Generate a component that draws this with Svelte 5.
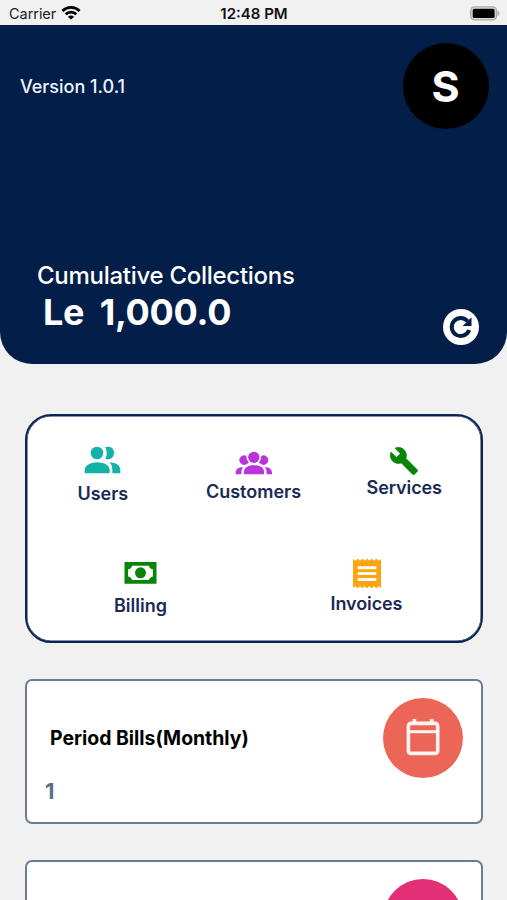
<script>
  const rows = [
    [
      { name: 'Users', icon: 'users' },
      { name: 'Customers', icon: 'customers' },
      { name: 'Services', icon: 'services' }
    ],
    [
      { name: 'Billing', icon: 'billing' },
      { name: 'Invoices', icon: 'invoices' }
    ]
  ];
</script>

<main class="screen">
  <div class="status">
    <div class="carrier">
      <span>Carrier</span>
      <svg width="20" height="15" viewBox="0 0 20 15" fill="none" stroke="#000" stroke-width="2.7">
        <path d="M1.4 5.9C6.3 1.3 13.7 1.3 18.6 5.9" />
        <path d="M4.7 9.300C7.7 6.400 12.3 6.400 15.3 9.300" />
        <path d="M10 14.600L6.900 11.700C8.700 10.100 11.300 10.100 13.100 11.700Z" fill="#000" stroke="none" />
      </svg>
    </div>
    <time>12:48 PM</time>
    <svg class="battery" width="31" height="15" viewBox="0 0 31 15">
      <rect x="0.8" y="0.9" width="25.6" height="13" rx="3.6" fill="#ddd" stroke="#aaa" stroke-width="1.4" />
      <rect x="2.7" y="2.8" width="21.9" height="9.2" rx="1.6" fill="#000" />
      <path d="M28 5.2Q30.2 7.4 28 9.6Z" fill="#aaa" stroke="#aaa" />
    </svg>
  </div>

  <header>
    <div class="top">
      <span class="version">Version 1.0.1</span>
      <div class="avatar"><span>S</span></div>
    </div>
    <div class="summary">
      <div>
        <div class="label">Cumulative Collections</div>
        <div class="amount"><span>Le</span><span>1,000.0</span></div>
      </div>
      <button class="refresh" aria-label="Refresh">
        <svg width="36" height="36" viewBox="0 0 36 36">
          <path d="M24.600 12.200A9 9 0 1 0 26.200 21" fill="none" stroke="#021e49" stroke-width="3.900" />
          <path d="M28.500 8.200V17H19.700Z" fill="#021e49" />
        </svg>
      </button>
    </div>
  </header>

  <section class="menu">
    {#each rows as row, i}
      <div class="row row{i}">
        {#each row as item}
          <div class="item {item.icon}">
            {#if item.icon === 'users'}
              <svg width="38" height="28" viewBox="75 49 114 84" fill="#14b1a7">
                <circle cx="114" cy="70" r="19" />
                <path d="M139 53C160 46 170 65 163 78C158 89 147 91 139 87C145 76 144 64 139 53Z" />
                <path d="M77 131V122C78 106 93 99 115 98C137 99 151 106 152 122V131Z" />
                <path d="M152 98C171 99 184 107 184 122V131H160V122C160 111 157 104 152 98Z" />
              </svg>
            {:else if item.icon === 'customers'}
              <svg width="38" height="24" viewBox="135 62 114 72" fill="#b933df">
                <circle cx="191.500" cy="81" r="17" />
                <path d="M169 77A14 14 0 1 0 170 101C177 99 177 96 174 93Q169 87 169 77Z" />
                <path d="M214 77A14 14 0 1 1 213 101C206 99 206 96 209 93Q214 87 214 77Z" />
                <path d="M162 132V123C164 110 175 105 192 105C209 105 221 110 222 123V132Z" />
                <path d="M137 132V126C138 116 145 111 159 110Q154 116 154 132Z" />
                <path d="M246 132V126C245 116 238 111 225 110Q230 116 230 132Z" />
              </svg>
            {:else if item.icon === 'services'}
              <svg width="30" height="30" viewBox="0 0 24 24" fill="#088408" stroke="#088408" stroke-width="0.400">
                <path d="M22.700 19l-9.100-9.100c.9-2.300.4-5-1.500-6.900-2-2-5-2.400-7.400-1.300L9 6 6 9 1.600 4.700C.4 7.100.9 10.100 2.900 12.100c1.900 1.900 4.600 2.400 6.900 1.500l9.100 9.100c.4.4 1 .4 1.400 0l2.300-2.300c.5-.4.5-1.100.1-1.400z" />
              </svg>
            {:else if item.icon === 'billing'}
              <svg width="33" height="22" viewBox="0 0 33 22">
                <path d="M0.500 0H32.500V21.700H0.500Z" fill="#088408" />
                <path d="M8 3.700H25Q25.600 6.800 28.900 7.300V14.400Q25.600 14.900 25 18H8Q7.400 14.900 4.100 14.400V7.300Q7.400 6.800 8 3.700Z" fill="#fff" />
                <circle cx="16.500" cy="10.800" r="5.500" fill="#088408" />
              </svg>
            {:else}
              <svg width="30" height="31" viewBox="0 0 30 31">
                <path d="M1 1L3.300 2.800 5.700 .8 8 2.800 10.300 .8 12.700 2.800 15 .8 17.300 2.800 19.700 .8 22 2.800 24.300 .8 26.700 2.800 29 1V30L26.700 28.200 24.300 30.200 22 28.200 19.700 30.200 17.300 28.200 15 30.200 12.700 28.200 10.300 30.200 8 28.200 5.700 30.200 3.300 28.200 1 30Z" fill="#fca510" />
                <path d="M5.700 9.700H24.300M5.700 15.600H24.300M5.700 21.500H24.300" stroke="#fff" stroke-width="2.900" />
              </svg>
            {/if}
            <span>{item.name}</span>
          </div>
        {/each}
      </div>
    {/each}
  </section>

  <section class="card">
    <div class="info">
      <h2>Period Bills(Monthly)</h2>
      <p>1</p>
    </div>
    <div class="disc coral">
      <svg width="34" height="38" viewBox="0 0 34 38" fill="none" stroke="#fff4f0" stroke-width="3.600">
        <rect x="2.400" y="5.400" width="29.300" height="30" rx="2.500" />
        <path d="M2.400 13.700H31.700" stroke-width="3" />
        <path d="M8.400 1V6M25.700 1V6" stroke-width="3.600" />
      </svg>
    </div>
  </section>
  <section class="card">
    <div class="info"></div>
    <div class="disc pink"></div>
  </section>
</main>

<style>
  :global(body) { margin: 0; background: #f1f1f1; }
  .screen {
    height: 900px;
    overflow: hidden;
    background: #f1f1f1;
    font-family: Inter, "Liberation Sans", sans-serif;
    box-sizing: border-box;
  }
  .screen * { box-sizing: border-box; }
  svg { display: block; flex: none; }
  .status {
    display: grid;
    grid-template-columns: 1fr auto 1fr;
    align-items: center;
    height: 25.400px;
    padding: 1px 6px 0 9px;
    font-size: 14.500px;
    color: #222;
  }
  .carrier { display: flex; align-items: center; gap: 5px; }
  .carrier span { letter-spacing: -0.050px; }
  .carrier svg { margin-top: -1px; }
  time { font-size: 15px; font-weight: 600; color: #111; margin-right: 2px; }
  .battery { justify-self: end; }
  header {
    height: 338.600px;
    background: #021e49;
    border-radius: 0 0 32px 32px;
    color: #fff;
    display: flex;
    flex-direction: column;
    justify-content: space-between;
    padding: 18px 18px 19px 20px;
  }
  .top { display: flex; align-items: center; justify-content: space-between; }
  .version { font-size: 18px; font-weight: 500; color: #f0f4ff; }
  .avatar {
    width: 86px; height: 86px; border-radius: 50%; background: #000;
    display: flex; align-items: center; justify-content: center;
    font-size: 43px; font-weight: 700;
  }
  .avatar span { margin-right: 1px; }
  .summary { display: flex; justify-content: space-between; align-items: flex-end; padding: 0 10px 0 17px; }
  .label { font-size: 24px; line-height: 30px; font-weight: 500; letter-spacing: -0.280px; white-space: nowrap; }
  .amount { display: flex; gap: 15.500px; padding-left: 6px; margin-bottom: 11px; margin-top: -1px; font-size: 36px; line-height: 44px; font-weight: 700; letter-spacing: -0.300px; white-space: nowrap; }
  .refresh { width: 36px; height: 36px; padding: 0; border: 0; border-radius: 50%; background: #fff; }
  .menu {
    margin: 50px 24.500px 0 25px;
    height: 229px;
    border: 2px solid #0a2453;
    box-shadow: inset 0 0 0 0.500px #0a2453;
    border-radius: 26px;
    background: #fff;
    padding: 30px 0 0 0.500px;
  }
  .row { display: flex; height: 113px; }
  .item { display: flex; flex-direction: column; align-items: center; font-size: 18px; line-height: 22px; font-weight: 600; color: #1a2a56; white-space: nowrap; }
  .row0 .item { width: 150.700px; }
  .row1 .item { width: 226px; }
  .users svg { margin-left: 1px; }
  .users span { margin-top: 9px; }
  .customers { padding-top: 5px; }
  .customers span { margin-top: 6px; }
  .services span { margin-top: 1px; letter-spacing: -0.100px; }
  .billing { padding-top: 3px; }
  .billing span { margin-top: 11px; }
  .invoices span { margin-top: 3px; letter-spacing: -0.100px; }
  .invoices svg { margin-top: -1px; margin-bottom: 1px; }
  .card {
    margin: 36px 24px 0 25px;
    height: 145px;
    border: 2px solid #6a7c96;
    border-radius: 7px;
    background: #fff;
    display: flex;
    justify-content: space-between;
    padding: 17px 18px 0 18px;
  }
  h2 { margin: 28px 0 0 5px; font-size: 19.400px; line-height: 24px; font-weight: 700; color: #000; white-space: nowrap; }
  p { margin: 28px 0 0; font-size: 22px; line-height: 26px; font-weight: 700; color: #5b6f86; }
  .disc { width: 80px; height: 80px; border-radius: 50%; display: flex; align-items: center; justify-content: center; flex: none; }
  .disc svg { margin-top: -2px; }
  .coral { background: #eb6657; }
  .pink { background: #e22f76; }
</style>
